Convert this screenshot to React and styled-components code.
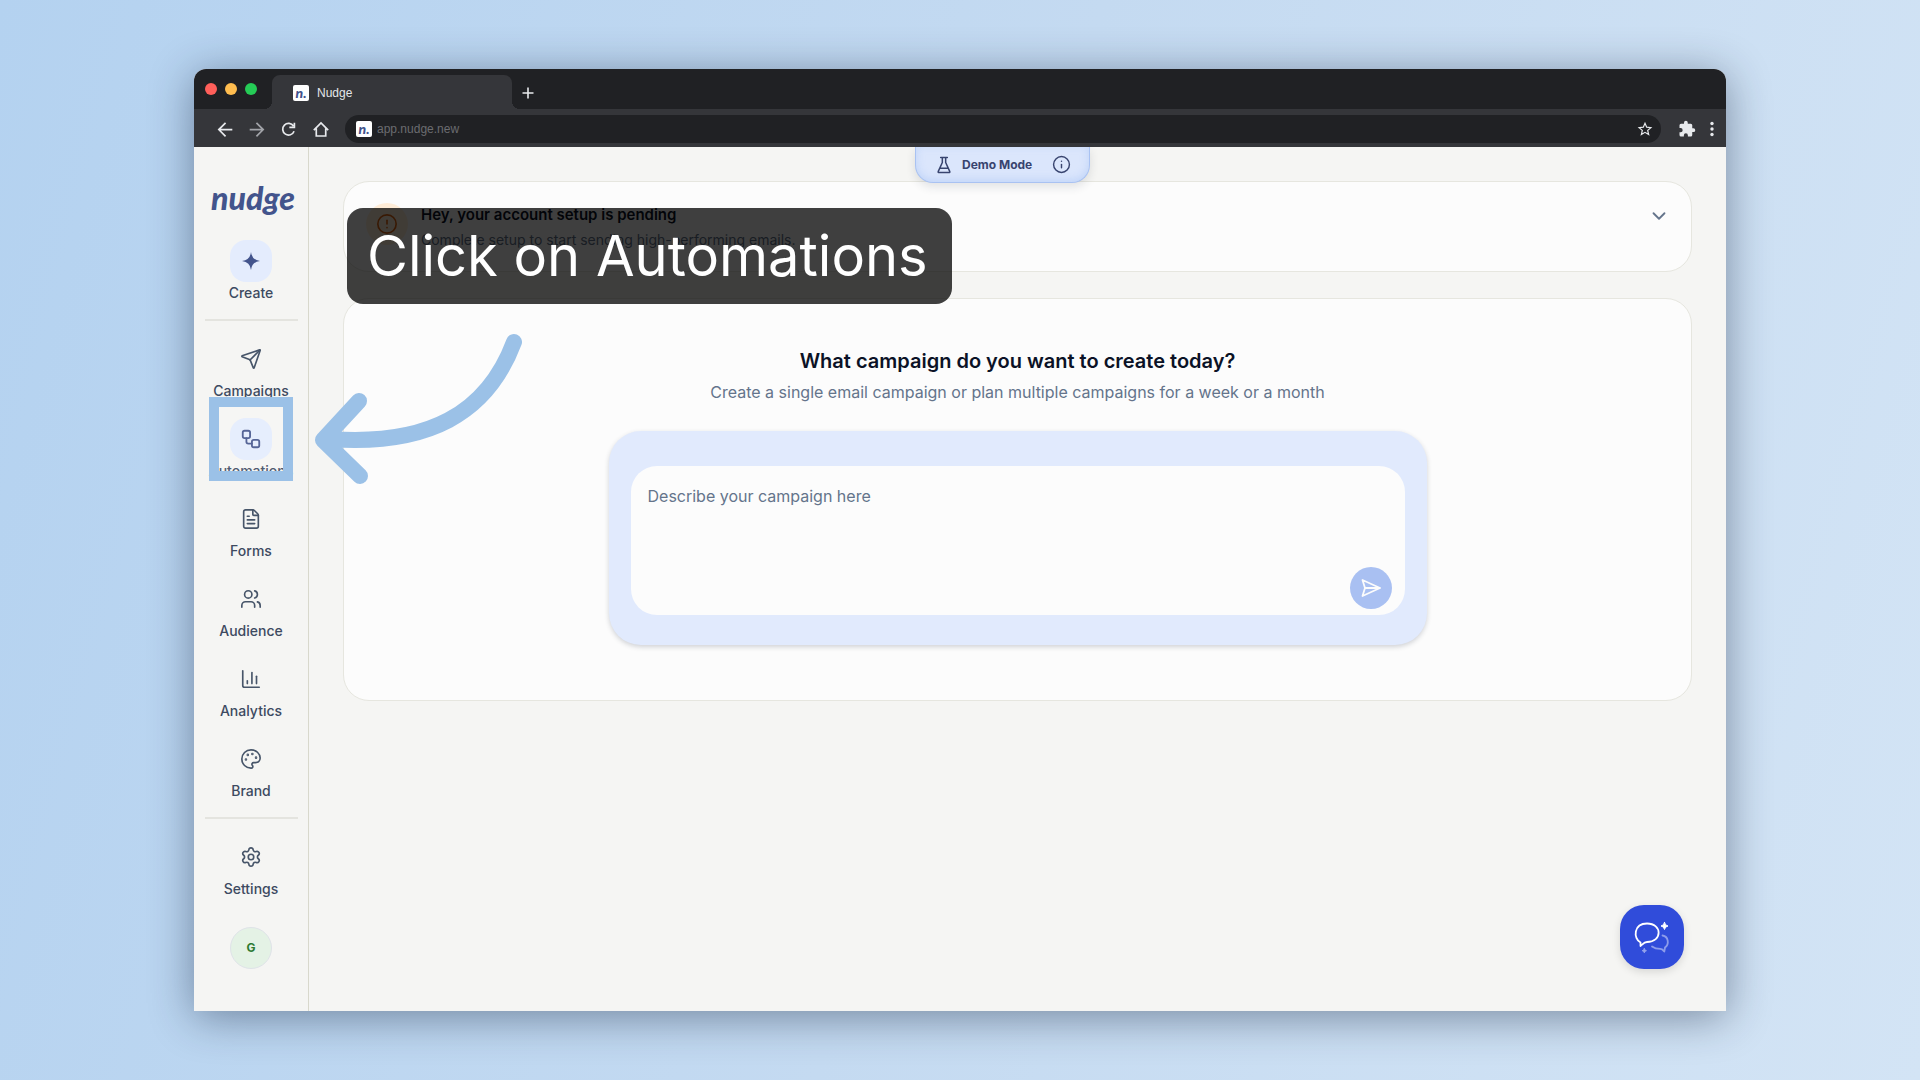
import React from "react";
import styled, { createGlobalStyle } from "styled-components";
import {
  Send, Workflow, FileText, Users, ChartColumn, Palette, Settings,
  ChevronDown, Info, CircleAlert,
} from "lucide-react";

const ui = `Inter, "Noto Sans", sans-serif`;
const chromeFont = `"Liberation Sans", Arial, sans-serif`;

const Global = createGlobalStyle`
  *, *::before, *::after { box-sizing: border-box; }
  body { margin: 0; }
  button, textarea, input { font: inherit; color: inherit; border: 0; padding: 0; margin: 0; background: none; }
  button { cursor: pointer; }
  a { color: inherit; text-decoration: none; }
  h1, h2, p { margin: 0; }
`;

const Stage = styled.div`
  min-height: 100vh;
  display: flex;
  padding: 69px 194px;
  background: linear-gradient(105deg, #b4d2f0 0%, #c4daf1 50%, #d3e4f5 100%);
  font-family: ${ui};
`;

const Browser = styled.div`
  position: relative;
  flex: 1;
  display: flex;
  flex-direction: column;
  border-radius: 12px 12px 0 0;
  background: #f5f5f3;
  box-shadow: 0 6px 44px rgba(20, 35, 60, 0.46);
`;

const TabBar = styled.header`
  display: flex;
  align-items: flex-end;
  height: 40px;
  border-radius: 12px 12px 0 0;
  background: #202124;
`;

const Lights = styled.div`
  display: flex;
  gap: 8px;
  padding: 0 15px 14px 11px;
`;

const Light = styled.span`
  width: 12px;
  height: 12px;
  border-radius: 50%;
  background: ${(p) => p.$color};
`;

const Tab = styled.div`
  position: relative;
  display: flex;
  align-items: center;
  gap: 8px;
  width: 240px;
  height: 34px;
  padding: 2px 0 0 21px;
  border-radius: 8px 8px 0 0;
  background: #35363a;
  color: #e4e6ea;
  font: 12px/16px ${chromeFont};
  &::before, &::after {
    content: "";
    position: absolute;
    bottom: 0;
    width: 8px;
    height: 8px;
  }
  &::before { left: -8px; background: radial-gradient(circle at 0 0, #202124 8px, #35363a 8px); }
  &::after { right: -8px; background: radial-gradient(circle at 100% 0, #202124 8px, #35363a 8px); }
`;

const Favicon = styled.span`
  display: flex;
  align-items: center;
  justify-content: center;
  width: 16px;
  height: 16px;
  border-radius: 2px;
  background: #fff;
  color: #43528c;
  font: italic 900 14px/12px Lato, sans-serif;
`;

const IconButton = styled.button`
  display: flex;
  color: ${(p) => p.$color || "#e8eaed"};
`;

const NewTab = styled(IconButton)`
  padding: 0 0 8px 8px;
`;

const ToolBar = styled.div`
  display: flex;
  align-items: center;
  height: 38px;
  padding: 2px 8px 0 22px;
  background: #35363a;
`;

const NavButtons = styled.div`
  display: flex;
  gap: 14px;
  margin-right: 15px;
`;

const AddressBar = styled.label`
  flex: 1;
  display: flex;
  align-items: center;
  gap: 5px;
  height: 28px;
  padding: 0 8px 0 11px;
  border-radius: 14px;
  background: #202124;
`;

const Address = styled.input`
  flex: 1;
  outline: 0;
  color: #6b6c70;
  font: 12px/16px ${chromeFont};
`;

const ToolEnd = styled.div`
  display: flex;
  align-items: center;
  gap: 10px;
  margin-left: 17px;
`;

const Body = styled.div`
  flex: 1;
  display: flex;
`;

const Sidebar = styled.nav`
  display: flex;
  flex-direction: column;
  align-items: center;
  gap: 18px;
  width: 115px;
  padding: 27px 0;
  border-right: 1px solid #d8d8cc;
`;

const Logo = styled.a`
  height: 48px;
  padding-left: 4px;
  color: #43548c;
  font: italic 900 32px/48px Lato, sans-serif;
`;

const Rule = styled.hr`
  width: 93px;
  height: 2px;
  margin: -1px 0;
  border: 0;
  background: #e4e4df;
`;

const Item = styled.a`
  display: flex;
  flex-direction: column;
  align-items: center;
  gap: 2px;
  color: #3d4a61;
  font-size: 14px;
  font-weight: 500;
  line-height: 18px;
`;

const Tile = styled.span`
  display: flex;
  align-items: center;
  justify-content: center;
  width: 42px;
  height: 42px;
  border-radius: 16px;
  background: ${(p) => (p.$on ? "#e4ecfd" : "transparent")};
  color: ${(p) => (p.$on ? "#43548c" : "#475569")};
`;

const Avatar = styled.button`
  width: 42px;
  height: 42px;
  margin-top: 11px;
  border: 1px solid #dfe3e8;
  border-radius: 50%;
  background: #e4f2e5;
  color: #2c7a32;
  font: 700 12px/16px ${ui};
`;

const Main = styled.main`
  flex: 1;
  display: flex;
  flex-direction: column;
  gap: 26px;
  padding: 34px;
`;

const Card = styled.section`
  border: 1px solid #e6e6df;
  border-radius: 26px;
  background: #fcfcfc;
`;

const Notice = styled(Card)`
  display: flex;
  align-items: flex-start;
  gap: 13px;
  padding: 21px 21px 20px 22px;
`;

const Alert = styled.span`
  display: flex;
  align-items: center;
  justify-content: center;
  width: 42px;
  height: 42px;
  border-radius: 50%;
  background: #ffedd8;
  color: #e0650f;
`;

const NoticeText = styled.div`
  flex: 1;
  display: flex;
  flex-direction: column;
  gap: 2px;
`;

const NoticeTitle = styled.h2`
  color: #0b1226;
  font-size: 15px;
  font-weight: 600;
  line-height: 24px;
`;

const Expand = styled(IconButton)`
  padding-top: 2px;
`;

const Muted = styled.p`
  color: #64748b;
  font-size: ${(p) => p.$size}px;
  line-height: 22px;
`;

const Composer = styled(Card)`
  display: flex;
  flex-direction: column;
  align-items: center;
  padding: 48px 24px 55px;
`;

const Title = styled.h1`
  margin-bottom: 6px;
  color: #0b1226;
  font-size: 20px;
  font-weight: 600;
  line-height: 28px;
`;

const Prompt = styled.form`
  width: 100%;
  max-width: 818px;
  margin-top: 28px;
  padding: 35px 22px 30px;
  border-radius: 32px;
  background: #e1eafd;
  box-shadow: 0 2px 5px rgba(30, 41, 59, 0.2);
`;

const Field = styled.div`
  display: flex;
  align-items: flex-end;
  height: 149px;
  padding: 18px 13px 6px 17px;
  border-radius: 26px;
  background: #fcfcfc;
`;

const Description = styled.textarea`
  flex: 1;
  height: 100%;
  outline: 0;
  resize: none;
  font-size: 16px;
  line-height: 24px;
  &::placeholder { color: #64748b; opacity: 1; }
`;

const Submit = styled.button`
  display: flex;
  align-items: center;
  justify-content: center;
  width: 42px;
  height: 42px;
  border-radius: 50%;
  background: #a9c0f2;
  color: #fcfcfc;
`;

const DemoBadge = styled.button`
  position: absolute;
  top: 78px;
  left: 50%;
  transform: translateX(-45px);
  display: flex;
  align-items: center;
  width: 175px;
  height: 36px;
  padding: 0 18px;
  border: 1px solid #a9c2f2;
  border-top: 0;
  border-radius: 0 0 18px 18px;
  background: #dbe6fc;
  box-shadow: 0 4px 10px rgba(30, 41, 59, 0.12), inset 0 -2px 8px rgba(150, 185, 245, 0.4);
  color: #38446f;
  font-size: 12px;
  font-weight: 700;
  line-height: 16px;
`;

const DemoLabel = styled.span`
  flex: 1;
  padding-left: 8px;
  text-align: left;
`;

const Chat = styled.button`
  position: absolute;
  right: 42px;
  bottom: 42px;
  width: 64px;
  height: 64px;
  border-radius: 24px;
  background: #304cda;
  box-shadow: 0 3px 8px rgba(0, 0, 0, 0.12);
`;

const Highlight = styled.div`
  position: absolute;
  top: 328px;
  left: 15px;
  width: 84px;
  height: 84px;
  border: 10px solid #9bc1e7;
  background: rgba(255, 255, 255, 0.1);
  pointer-events: none;
`;

const Arrow = styled.svg`
  position: absolute;
  top: 256px;
  left: 116px;
  pointer-events: none;
`;

const Caption = styled.div`
  position: absolute;
  top: 139px;
  left: 153px;
  padding: 14px 24px 14px 20px;
  border-radius: 16px;
  background: rgba(0, 0, 0, 0.75);
  color: #fff;
  font: 56px/68px Inter, sans-serif;
  white-space: nowrap;
  pointer-events: none;
`;

const Sparkle = () => (
  <svg width="20" height="20" viewBox="0 0 20 20" fill="currentColor" aria-hidden="true">
    <path d="M10 1q.9 8.100 9 9q-8.100.9-9 9q-.9-8.100-9-9q8.100-.9 9-9z" />
  </svg>
);

const Glyph = ({ d, size = 16, width = 1.6 }) => (
  <svg width={size} height={size} viewBox="0 0 16 16" fill="none" stroke="currentColor" strokeWidth={width} aria-hidden="true">
    <path d={d} />
  </svg>
);

const navItems = [
  ["Campaigns", Send],
  ["Automations", Workflow, true],
  ["Forms", FileText],
  ["Audience", Users],
  ["Analytics", ChartColumn],
  ["Brand", Palette],
];

function NavItem({ label, icon: Icon, on }) {
  return (
    <Item href="#">
      <Tile $on={on}><Icon size={22} strokeWidth={on ? 2 : 1.8} /></Tile>
      {label}
    </Item>
  );
}

export default function App() {
  return (
    <Stage>
      <Global />
      <Browser>
        <TabBar>
          <Lights>
            <Light $color="#ff5f5a" />
            <Light $color="#ffbd4f" />
            <Light $color="#25cc56" />
          </Lights>
          <Tab><Favicon>n.</Favicon>Nudge</Tab>
          <NewTab aria-label="New tab"><Glyph d="M2.500 8h11M8 2.500v11" width={1.600} /></NewTab>
        </TabBar>
        <ToolBar>
          <NavButtons>
            <IconButton aria-label="Back"><Glyph size={18} d="M14.500 8.500H2.500M8.500 2.500l-6 6 6 6" width={1.500} /></IconButton>
            <IconButton aria-label="Forward" $color="#a2a4a9"><Glyph size={18} d="M1.500 8.500h12M7.500 2.500l6 6-6 6" width={1.500} /></IconButton>
            <IconButton aria-label="Reload"><Glyph size={18} d="M12 5.400A5.200 5.200 0 1 0 12.500 10M12.800 2.500v4h-4.500" width={1.500} /></IconButton>
            <IconButton aria-label="Home"><Glyph size={18} d="M1.600 9L8 2.600 14.400 9M3.800 7.500v6.700h8.400V7.500" width={1.500} /></IconButton>
          </NavButtons>
          <AddressBar>
            <Favicon>n.</Favicon>
            <Address aria-label="Address" defaultValue="app.nudge.new" />
            <IconButton type="button" aria-label="Bookmark">
              <Glyph d="M8 2.300l1.700 3.900 4.200.4-3.200 2.800.95 4.150L8 11.350l-3.650 2.200.95-4.150L2.100 6.600l4.200-.4z" width={1.200} />
            </IconButton>
          </AddressBar>
          <ToolEnd>
            <IconButton aria-label="Extensions">
              <svg width="18" height="18" viewBox="0 0 24 24" fill="currentColor"><path d="M20.500 11H19V7a2 2 0 0 0-2-2h-4V3.500a2.500 2.500 0 0 0-5 0V5H4a2 2 0 0 0-2 2v3.800h1.500a2.700 2.700 0 0 1 0 5.400H2V20a2 2 0 0 0 2 2h3.800v-1.500a2.700 2.700 0 0 1 5.400 0V22H17a2 2 0 0 0 2-2v-4h1.500a2.500 2.500 0 0 0 0-5z" /></svg>
            </IconButton>
            <IconButton aria-label="More">
              <svg width="12" height="16" viewBox="0 0 12 16" fill="currentColor"><circle cx="6" cy="2.500" r="1.700" /><circle cx="6" cy="8" r="1.700" /><circle cx="6" cy="13.500" r="1.700" /></svg>
            </IconButton>
          </ToolEnd>
        </ToolBar>
        <Body>
          <Sidebar>
            <Logo href="#">nudge</Logo>
            <Item href="#"><Tile $on><Sparkle /></Tile>Create</Item>
            <Rule />
            {navItems.map(([label, icon, on]) => <NavItem key={label} label={label} icon={icon} on={on} />)}
            <Rule />
            <NavItem label="Settings" icon={Settings} />
            <Avatar>G</Avatar>
          </Sidebar>
          <Main>
            <Notice>
              <Alert><CircleAlert size={22} strokeWidth={1.800} /></Alert>
              <NoticeText>
                <NoticeTitle>Hey, your account setup is pending</NoticeTitle>
                <Muted $size={14}>Complete setup to start sending high-performing emails.</Muted>
              </NoticeText>
              <Expand aria-label="Expand" $color="#64748b"><ChevronDown size={22} strokeWidth={2} /></Expand>
            </Notice>
            <Composer>
              <Title>What campaign do you want to create today?</Title>
              <Muted $size={16}>Create a single email campaign or plan multiple campaigns for a week or a month</Muted>
              <Prompt onSubmit={(e) => e.preventDefault()}>
                <Field>
                  <Description aria-label="Campaign description" placeholder="Describe your campaign here" />
                  <Submit aria-label="Send">
                    <svg width="20" height="20" viewBox="0 0 20 20" fill="none" stroke="currentColor" strokeWidth="1.800" strokeLinejoin="round" strokeLinecap="round">
                      <path d="M1.500 2L19 10 1.500 18 4 10zM4 10h15" />
                    </svg>
                  </Submit>
                </Field>
              </Prompt>
            </Composer>
          </Main>
        </Body>
        <DemoBadge>
          <svg width="20" height="20" viewBox="0 0 24 24" fill="none" stroke="currentColor" strokeWidth="1.800" strokeLinecap="round" strokeLinejoin="round">
            <path d="M8 3h8M10 3v6L5 20a.7.7 0 0 0 .5 1h13a.7.7 0 0 0 .5-1L14 9V3M7 16h10" />
          </svg>
          <DemoLabel>Demo Mode</DemoLabel>
          <Info size={19} strokeWidth={1.800} />
        </DemoBadge>
        <Chat aria-label="Open chat">
          <svg width="64" height="64" viewBox="0 0 64 64" fill="none" stroke="#fff" strokeWidth="1.800" strokeLinejoin="round" strokeLinecap="round">
            <path d="M20.500 41v-3.500C13 33.500 13.500 18.500 27 18.500c15.500 0 15.500 18.500 0 18.500-3 0-4.500 2.500-6.500 4z" />
            <path d="M42.500 30.500c6 1 7 8.500 2.500 12l-.7 4c-1.300-1.500-2-2.600-4-2.600-3.300 0-5.600-.4-8.300-2.400" opacity=".45" />
            <path d="M44.500 17.500q.5 3 3.500 3.500-3 .5-3.500 3.500-.5-3-3.500-3.500 3-.5 3.500-3.500z" fill="#fff" strokeWidth="1" />
            <path d="M24.300 43.500q.3 2 2.200 2.200-1.900.3-2.200 2.200-.3-1.900-2.200-2.200 1.900-.2 2.200-2.200z" fill="#fff" strokeWidth=".8" opacity=".5" />
          </svg>
        </Chat>
        <Highlight />
        <Arrow width="220" height="170" viewBox="310 325 220 170" fill="none" stroke="#9bc1e7" strokeWidth="16" strokeLinecap="round" strokeLinejoin="round">
          <path d="M514 342C487 414 428 446 330 439M359 401L323 440 360 476" />
        </Arrow>
        <Caption>Click on Automations</Caption>
      </Browser>
    </Stage>
  );
}
